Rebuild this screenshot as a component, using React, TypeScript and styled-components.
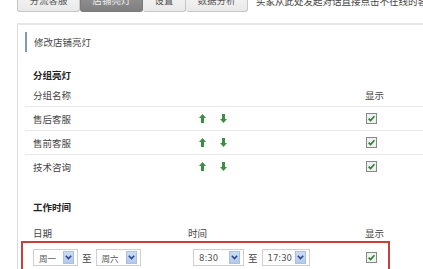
import React from "react"
import styled, { createGlobalStyle } from "styled-components"

const GlobalStyle = createGlobalStyle`
    html, body {
        margin: 0;
        padding: 0;
        background: #fff;
        overflow: hidden;
    }
    body {
        font-family: "Noto Sans CJK SC", "Noto Sans", sans-serif;
        font-size: 9.5px;
        color: #444;
    }
`

const Page = styled.div`
    width: 423px;
    height: 269px;
    overflow: hidden;
`

const TabBar = styled.div`
    display: flex;
    align-items: flex-end;
    margin-top: -11px;
    padding-left: 17px;
    height: 23px;
`

const Tab = styled.div<{ $active?: boolean }>`
    height: 22px;
    line-height: 22px;
    padding: 0 11.5px;
    border: 1px solid ${p => (p.$active ? "#7a7a7a" : "#c6c6c6")};
    border-top: none;
    border-left-width: ${p => (p.$active ? "1px" : "0")};
    border-radius: 0 0 3px 3px;
    background: ${p => (p.$active ? "linear-gradient(#9b9b9b, #7f7f7f)" : "linear-gradient(#f8f8f8, #e9e9e9)")};
    color: ${p => (p.$active ? "#f2f2f2" : "#555")};
    white-space: nowrap;
    &:first-child {
        border-left-width: 1px;
    }
`

const Tip = styled.div`
    margin-left: 8px;
    line-height: 22px;
    height: 22px;
    white-space: nowrap;
    color: #444;
`

const Panel = styled.div`
    margin: 11px 0 0 17px;
    width: 430px;
    border-top: 2px solid #e7e7e7;
    border-left: 1px solid #dcdcdc;
`

const PanelTitle = styled.div`
    display: flex;
    align-items: center;
    margin: 7px 0 0 7px;
    height: 20px;
    padding-left: 7px;
    border-left: 2px solid #7d9bb4;
    color: #444;
`

const SectionTitle = styled.div<{ $gap: number }>`
    margin: ${p => p.$gap}px 0 0 15px;
    line-height: 16px;
    font-weight: bold;
    color: #222;
`

const Grid = styled.div`
    display: grid;
    grid-template-columns: 163px 177px 1fr;
    margin-left: 7px;
`

const Row = styled.div<{ $head?: boolean; $last?: boolean }>`
    display: contents;
    & > div {
        height: ${p => (p.$head ? "23px" : "23px")};
        border-bottom: ${p => (p.$last ? "none" : "1px solid #e9e9e9")};
    }
`

const Cell = styled.div<{ $pad?: number }>`
    display: flex;
    align-items: center;
    gap: 14px;
    padding-left: ${p => p.$pad ?? 0}px;
`

const HeadRow = styled.div`
    display: grid;
    grid-template-columns: 163px 177px 1fr;
    margin: 10px 0 0 7px;
    line-height: 16px;
    & > div:first-child {
        padding-left: 8px;
    }
`

const Highlight = styled.div`
    margin-left: 3px;
    width: 365px;
    height: 40px;
    border: 2px solid #c6403c;
    border-bottom: none;
    display: grid;
    grid-template-columns: 165px 177px 1fr;
    align-items: start;
    padding-top: 6px;
`

const Inline = styled.div<{ $pad: number }>`
    display: flex;
    align-items: center;
    gap: 4px;
    padding-left: ${p => p.$pad}px;
    height: 17px;
`

const SelectBox = styled.div<{ $w: number }>`
    display: flex;
    align-items: center;
    justify-content: space-between;
    box-sizing: border-box;
    width: ${p => p.$w}px;
    height: 17px;
    padding: 0 3px 0 5px;
    border: 1px solid #cfcfcf;
    background: #fff;
    color: #555;
    font-family: "DejaVu Sans", "Noto Sans CJK SC", sans-serif;
    font-size: 8.5px;
`

const DropBtn = styled.span`
    display: flex;
    align-items: center;
    justify-content: center;
    width: 9px;
    height: 11px;
    background: linear-gradient(#cddcf3, #b3c8ea);
    border: 1px solid #a9bfe3;
`

const To = styled.span`
    color: #444;
`

const ArrowUp = () => (
    <svg width="7" height="9" viewBox="0 0 7 9">
        <path d="M3.5 0 L7 4 H5 V9 H2 V4 H0 Z" fill="#3e8e41" />
    </svg>
)

const ArrowDown = () => (
    <svg width="7" height="9" viewBox="0 0 7 9">
        <path d="M3.5 9 L7 5 H5 V0 H2 V5 H0 Z" fill="#3e8e41" />
    </svg>
)

const Check = () => (
    <svg width="11" height="11" viewBox="0 0 11 11">
        <rect x="0.5" y="0.5" width="10" height="10" fill="#eef2ee" stroke="#858a85" />
        <path d="M2.6 5.6 L4.6 7.6 L8.4 3.2" fill="none" stroke="#2f7d32" strokeWidth="1.6" />
    </svg>
)

const Chevron = () => (
    <svg width="7" height="5" viewBox="0 0 7 5">
        <path d="M0.8 0.8 L3.5 3.6 L6.2 0.8" fill="none" stroke="#27458a" strokeWidth="1.5" />
    </svg>
)

function Select({ value, width }: { value: string; width: number }) {
    return (
        <SelectBox $w={width}>
            <span>{value}</span>
            <DropBtn><Chevron /></DropBtn>
        </SelectBox>
    )
}

const groups = ["售后客服", "售前客服", "技术咨询"]

export default function App() {
    return (
        <Page>
            <GlobalStyle />
            <TabBar>
                <Tab>分流客服</Tab>
                <Tab $active>店铺亮灯</Tab>
                <Tab>设置</Tab>
                <Tab>数据分析</Tab>
                <Tip>买家从此处发起对话直接点击不在线的客服留言</Tip>
            </TabBar>
            <Panel>
                <PanelTitle>修改店铺亮灯</PanelTitle>

                <SectionTitle $gap={15}>分组亮灯</SectionTitle>
                <Grid>
                    <Row $head>
                        <Cell $pad={8}>分组名称</Cell>
                        <Cell />
                        <Cell>显示</Cell>
                    </Row>
                    {groups.map((g, i) => (
                        <Row key={g} $last={i === groups.length - 1}>
                            <Cell $pad={8}>{g}</Cell>
                            <Cell $pad={11}><ArrowUp /><ArrowDown /></Cell>
                            <Cell $pad={1}><Check /></Cell>
                        </Row>
                    ))}
                </Grid>

                <SectionTitle $gap={21}>工作时间</SectionTitle>
                <HeadRow>
                    <div>日期</div>
                    <div>时间</div>
                    <div>显示</div>
                </HeadRow>
                <Highlight>
                    <Inline $pad={10}>
                        <Select value="周一" width={45} />
                        <To>至</To>
                        <Select value="周六" width={45} />
                    </Inline>
                    <Inline $pad={5}>
                        <Select value="8:30" width={51} />
                        <To>至</To>
                        <Select value="17:30" width={48} />
                    </Inline>
                    <Inline $pad={1}><Check /></Inline>
                </Highlight>
            </Panel>
        </Page>
    )
}
